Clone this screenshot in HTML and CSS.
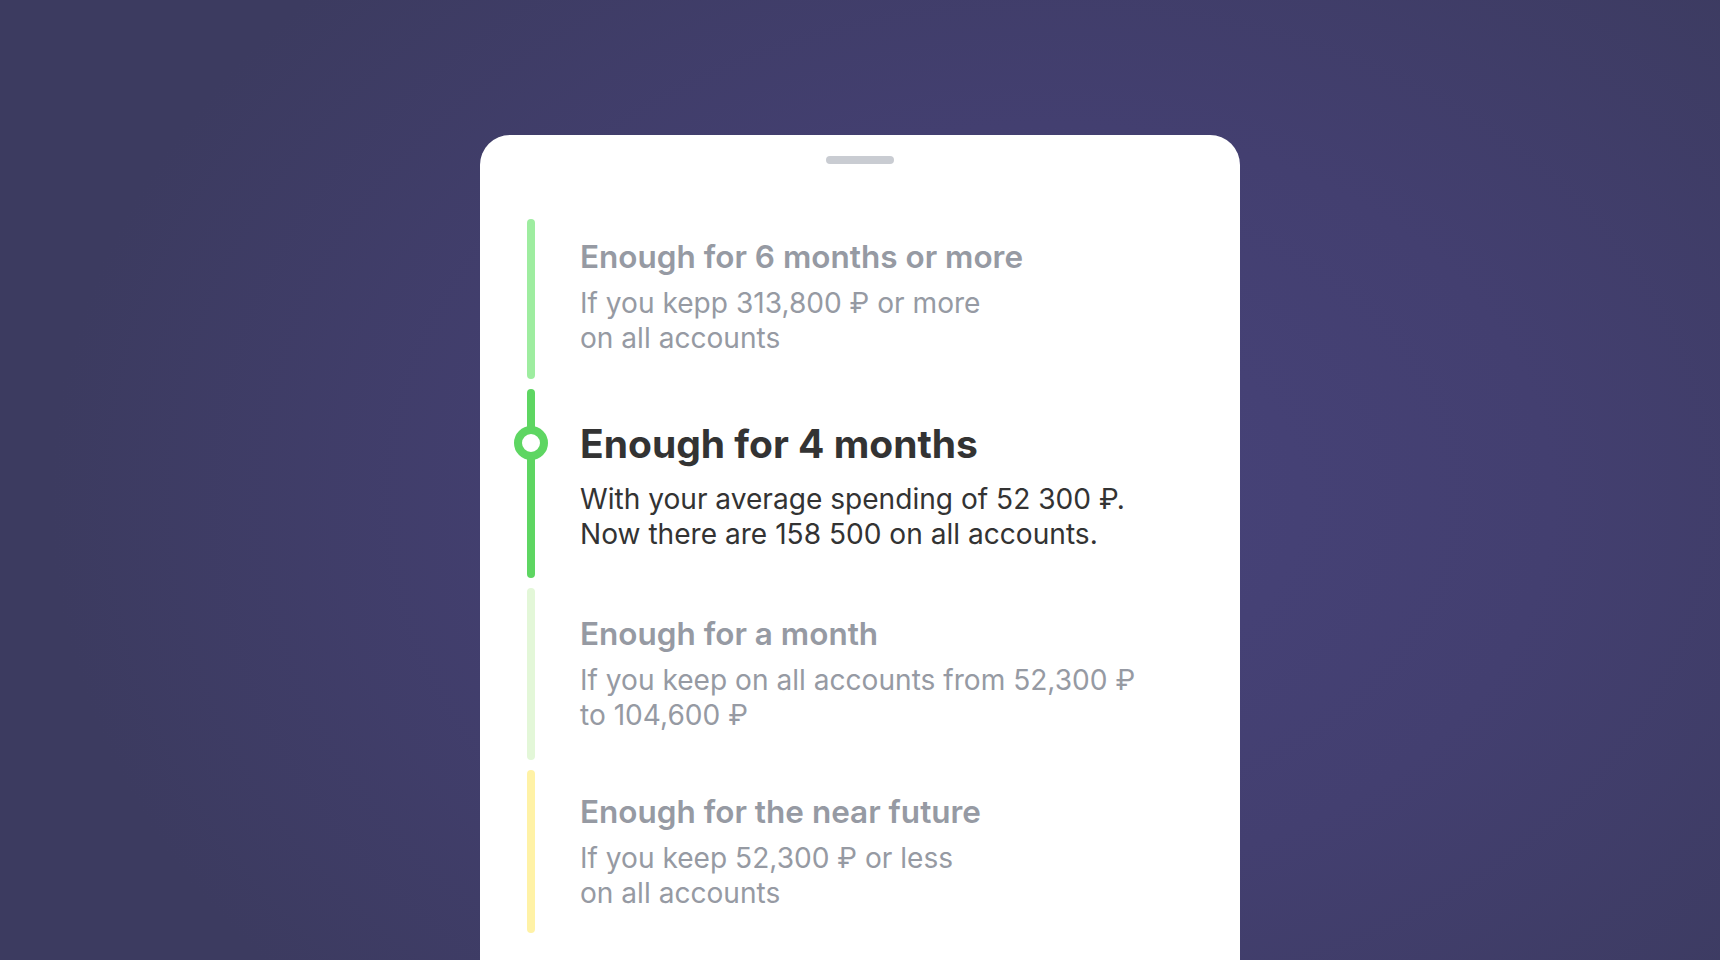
FILE: index.html
```html
<!DOCTYPE html>
<html lang="en">
<head>
<meta charset="utf-8">
<title>Safety cushion</title>
<link rel="stylesheet" href="styles.css">
</head>
<body>
<main class="stage">
  <section class="sheet">
    <div class="handle"></div>
    <ul class="levels">
      <li class="level level--six">
        <span class="rail rail--six"></span>
        <div class="level-text">
          <h3 class="level-title">Enough for 6 months or more</h3>
          <p class="level-desc">If you kepp 313,800 ₽ or more<br>on all accounts</p>
        </div>
      </li>
      <li class="level level--active">
        <span class="rail rail--active"><span class="marker"></span></span>
        <div class="level-text">
          <h3 class="level-title level-title--active">Enough for 4 months</h3>
          <p class="level-desc level-desc--active">With your average spending of 52 300 ₽.<br>Now there are 158 500 on all accounts.</p>
        </div>
      </li>
      <li class="level level--month">
        <span class="rail rail--month"></span>
        <div class="level-text">
          <h3 class="level-title">Enough for a month</h3>
          <p class="level-desc">If you keep on all accounts from 52,300 ₽<br>to 104,600 ₽</p>
        </div>
      </li>
      <li class="level level--near">
        <span class="rail rail--near"></span>
        <div class="level-text">
          <h3 class="level-title">Enough for the near future</h3>
          <p class="level-desc">If you keep 52,300 ₽ or less<br>on all accounts</p>
        </div>
      </li>
    </ul>
  </section>
</main>
</body>
</html>
```

FILE: styles.css
```css
* { box-sizing: border-box; }
html, body { margin: 0; padding: 0; }
body {
  width: 1720px;
  height: 960px;
  overflow: hidden;
  font-family: Inter, "Noto Sans", "Liberation Sans", sans-serif;
  background: radial-gradient(ellipse 1000px 750px at 1050px 500px, #47437a 0%, #433f70 50%, #3c3b60 100%);
}
.stage {
  display: flex;
  justify-content: center;
  padding-top: 135px;
  height: 960px;
}
.sheet {
  width: 760px;
  height: 900px;
  background: #ffffff;
  border-radius: 30px 30px 0 0;
  padding-top: 21px;
}
.handle {
  width: 68px;
  height: 8px;
  border-radius: 4px;
  background: #c9ccd2;
  margin: 0 auto;
}
.levels {
  list-style: none;
  margin: 55px 0 0;
  padding: 0 0 0 47px;
  display: flex;
  flex-direction: column;
  gap: 10px;
}
.level {
  display: flex;
  align-items: stretch;
}
.rail {
  position: relative;
  flex: 0 0 8px;
  width: 8px;
  border-radius: 4px;
}
.rail--six { background: #9eeda0; }
.rail--active { background: #5ed662; }
.rail--month { background: #e3f7d8; }
.rail--near { background: #fff2a6; }
.marker {
  position: absolute;
  left: 50%;
  top: 37px;
  width: 34px;
  height: 34px;
  margin-left: -17px;
  border-radius: 50%;
  background: #ffffff;
  border: 8px solid #5ed662;
}
.level--six .level-text { padding: 18px 0 23px 45px; }
.level--active .level-text { padding: 30px 0 26px 45px; }
.level--month .level-text { padding: 26px 0 27px 45px; }
.level--near .level-text { padding: 22px 0 22px 45px; }
.level-title {
  margin: 0;
  font-size: 31.5px;
  line-height: 40px;
  font-weight: 600;
  color: #969aa3;
}
.level-title--active {
  font-size: 39px;
  line-height: 50px;
  font-weight: 700;
  color: #333333;
}
.level-desc {
  margin: 9px 0 0;
  font-size: 28.1px;
  line-height: 35px;
  font-weight: 400;
  color: #969aa3;
}
.level-desc--active {
  color: #333333;
  margin-top: 13px;
}
```
